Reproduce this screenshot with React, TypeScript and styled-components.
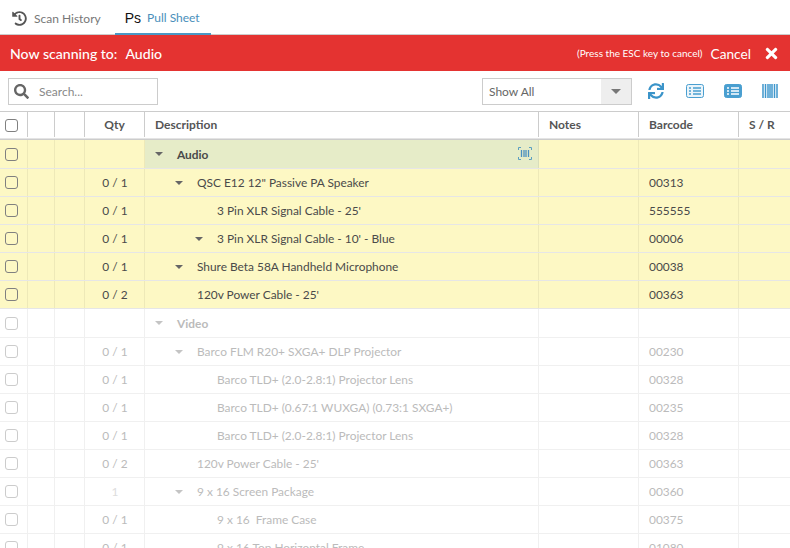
import React from 'react';
import styled, { createGlobalStyle } from 'styled-components';
import { FaHistory, FaSearch, FaSync, FaTimes } from 'react-icons/fa';

const GlobalStyle = createGlobalStyle`
  html, body {
    margin: 0;
    height: 100%;
    overflow: hidden;
    background: #fff;
    font-family: Lato, "Liberation Sans", sans-serif;
    color: #444;
  }
`;

type Item = { qty?: string; desc: string; depth: number; caret?: boolean; barcode?: string; group?: boolean };

const activeItems: Item[] = [
  { desc: 'Audio', depth: 0, caret: true, group: true },
  { qty: '0 / 1', desc: 'QSC E12 12" Passive PA Speaker', depth: 1, caret: true, barcode: '00313' },
  { qty: '0 / 1', desc: "3 Pin XLR Signal Cable - 25'", depth: 2, barcode: '555555' },
  { qty: '0 / 1', desc: "3 Pin XLR Signal Cable - 10' - Blue", depth: 2, caret: true, barcode: '00006' },
  { qty: '0 / 1', desc: 'Shure Beta 58A Handheld Microphone', depth: 1, caret: true, barcode: '00038' },
  { qty: '0 / 2', desc: "120v Power Cable - 25'", depth: 1, barcode: '00363' },
];

const dimItems: Item[] = [
  { desc: 'Video', depth: 0, caret: true, group: true },
  { qty: '0 / 1', desc: 'Barco FLM R20+ SXGA+ DLP Projector', depth: 1, caret: true, barcode: '00230' },
  { qty: '0 / 1', desc: 'Barco TLD+ (2.0-2.8:1) Projector Lens', depth: 2, barcode: '00328' },
  { qty: '0 / 1', desc: 'Barco TLD+ (0.67:1 WUXGA) (0.73:1 SXGA+)', depth: 2, barcode: '00235' },
  { qty: '0 / 1', desc: 'Barco TLD+ (2.0-2.8:1) Projector Lens', depth: 2, barcode: '00328' },
  { qty: '0 / 2', desc: "120v Power Cable - 25'", depth: 1, barcode: '00363' },
  { qty: '1', desc: '9 x 16 Screen Package', depth: 1, caret: true, barcode: '00360' },
  { qty: '0 / 1', desc: '9 x 16  Frame Case', depth: 2, barcode: '00375' },
  { qty: '0 / 1', desc: '9 x 16 Top Horizontal Frame', depth: 2, barcode: '01080' },
];

const ScanIcon = () => (
  <svg width="14" height="13" viewBox="0 0 14 13" fill="none">
    <path d="M0.5 3V0.5H3M11 0.5H13.5V3M13.5 10V12.5H11M3 12.5H0.5V10" stroke="#5a9fc0" strokeWidth="1" />
    <path d="M3.5 3V10M6 3V10M8 3V10M10.5 3V10" stroke="#4a8fc0" strokeWidth="1.3" />
  </svg>
);

const ListIcon = ({ filled }: { filled?: boolean }) => (
  <svg width="18" height="14" viewBox="0 0 18 14">
    <rect
      x="0.5"
      y="0.5"
      width="17"
      height="13"
      rx="2"
      fill={filled ? '#4a9fd0' : '#eaf4fa'}
      stroke="#4a9fd0"
    />
    <path
      d="M3 4H5M3 7H5M3 10H5M7 4H15M7 7H15M7 10H15"
      stroke={filled ? '#fff' : '#4a9fd0'}
      strokeWidth="1.6"
    />
  </svg>
);

const BarcodeIcon = () => (
  <svg width="16" height="14" viewBox="0 0 16 14">
    <path d="M1 0V14M3.5 0V14M6 0V14M8 0V14M10 0V14M12.5 0V14M15 0V14" stroke="#3f97cc" strokeWidth="1.5" />
  </svg>
);

const Row = ({ item, dim }: { item: Item; dim?: boolean }) => (
  <TableRow $dim={dim} $group={item.group}>
    <CheckCell>
      <Check $dim={dim} />
    </CheckCell>
    <Cell />
    <Cell />
    <QtyCell $faint={item.qty === '1'}>{item.qty}</QtyCell>
    <DescCell $group={item.group} $dim={dim}>
      <Indent $depth={item.depth}>
        {item.caret ? <Caret $dim={dim} /> : <CaretSpace />}
        <DescText $group={item.group}>{item.desc}</DescText>
      </Indent>
      {item.group && !dim && (
        <ScanSlot>
          <ScanIcon />
        </ScanSlot>
      )}
    </DescCell>
    <Cell />
    <BarcodeCell>{item.barcode}</BarcodeCell>
    <Cell />
  </TableRow>
);

export default function App() {
  return (
    <Page>
      <GlobalStyle />
      <Tabs>
        <Tab>
          <FaHistory size={15} color="#555" />
          <TabLabel>Scan History</TabLabel>
        </Tab>
        <Tab $active>
          <PsMark>Ps</PsMark>
          <TabLabel $active>Pull Sheet</TabLabel>
        </Tab>
      </Tabs>
      <Banner>
        <BannerTitle>
          Now scanning to:<BannerTarget>Audio</BannerTarget>
        </BannerTitle>
        <BannerActions>
          <EscHint>(Press the ESC key to cancel)</EscHint>
          <CancelLabel>Cancel</CancelLabel>
          <FaTimes size={17} color="#fff" />
        </BannerActions>
      </Banner>
      <Toolbar>
        <SearchBox>
          <FaSearch size={15} color="#666" />
          <SearchInput placeholder="Search..." />
        </SearchBox>
        <ToolbarRight>
          <SelectBox>
            <SelectValue>Show All</SelectValue>
            <SelectButton>
              <SelectCaret />
            </SelectButton>
          </SelectBox>
          <IconGroup>
            <FaSync size={16} color="#3b94c9" />
            <ListIcon />
            <ListIcon filled />
            <BarcodeIcon />
          </IconGroup>
        </ToolbarRight>
      </Toolbar>
      <HeaderRow>
        <HeadCheckCell>
          <Check $head />
        </HeadCheckCell>
        <HeadCell />
        <HeadCell />
        <HeadCell $center>Qty</HeadCell>
        <HeadCell>Description</HeadCell>
        <HeadCell>Notes</HeadCell>
        <HeadCell>Barcode</HeadCell>
        <HeadCell>S / R</HeadCell>
      </HeaderRow>
      {activeItems.map((item, i) => (
        <Row key={i} item={item} />
      ))}
      {dimItems.map((item, i) => (
        <Row key={i} item={item} dim />
      ))}
    </Page>
  );
}

const columns = '28px 27px 30px 60px 394px 100px 100px 1fr';

const Page = styled.div`
  width: 790px;
  height: 548px;
  overflow: hidden;
`;

const Tabs = styled.div`
  display: flex;
  height: 34px;
  padding-left: 12px;
  gap: 15px;
  border-bottom: 1px solid #ccc;
`;

const Tab = styled.div<{ $active?: boolean }>`
  display: flex;
  align-items: center;
  gap: ${p => (p.$active ? '6px' : '7px')};
  height: 35px;
  box-sizing: border-box;
  margin-left: ${p => (p.$active ? '-1px' : '0')};
  padding: ${p => (p.$active ? '2px 11px 0 10px' : '2px 0 0')};
  border-bottom: ${p => (p.$active ? '2px solid #4a97c4' : 'none')};
`;

const TabLabel = styled.span<{ $active?: boolean }>`
  font-size: 12px;
  color: ${p => (p.$active ? '#4a8fbb' : '#777')};
`;

const PsMark = styled.span`
  font-family: 'Liberation Sans', sans-serif;
  font-size: 14px;
  color: #111;
`;

const Banner = styled.div`
  display: flex;
  align-items: center;
  justify-content: space-between;
  height: 36px;
  padding: 0 10px 0 10px;
  background: #e43331;
  color: #fff;
`;

const BannerTitle = styled.div`
  font-size: 14.1px;
  font-weight: 500;
`;

const BannerTarget = styled.span`
  margin-left: 8px;
`;

const BannerActions = styled.div`
  display: flex;
  align-items: center;
`;

const EscHint = styled.span`
  font-size: 10px;
  margin-right: 8px;
`;

const CancelLabel = styled.span`
  font-size: 13.7px;
  margin-right: 12px;
`;

const Toolbar = styled.div`
  display: flex;
  align-items: center;
  justify-content: space-between;
  height: 40px;
  padding: 0 12px 0 8px;
  box-sizing: border-box;
`;

const SearchBox = styled.div`
  display: flex;
  align-items: center;
  box-sizing: border-box;
  width: 150px;
  height: 27px;
  padding-left: 5px;
  border: 1px solid #ccc;
`;

const SearchInput = styled.input`
  width: 100px;
  margin-left: 10px;
  padding: 0;
  border: 0;
  outline: 0;
  background: transparent;
  font-family: inherit;
  font-size: 12px;
  &::placeholder {
    color: #888;
    opacity: 1;
  }
`;

const ToolbarRight = styled.div`
  display: flex;
  align-items: center;
`;

const SelectBox = styled.div`
  display: flex;
  box-sizing: border-box;
  width: 150px;
  height: 27px;
  border: 1px solid #ccc;
`;

const SelectValue = styled.div`
  flex: 1;
  padding-left: 6px;
  line-height: 25px;
  font-size: 12px;
  color: #666;
`;

const SelectButton = styled.div`
  display: flex;
  align-items: center;
  justify-content: center;
  width: 30px;
  background: #eee;
`;

const SelectCaret = styled.div`
  border-left: 5px solid transparent;
  border-right: 5px solid transparent;
  border-top: 5px solid #777;
`;

const IconGroup = styled.div`
  display: flex;
  align-items: center;
  gap: 20px;
  margin-left: 16px;
  & > svg:first-child {
    margin-right: 2px;
  }
`;

const HeaderRow = styled.div`
  display: grid;
  grid-template-columns: ${columns};
  height: 29px;
  box-sizing: border-box;
  border-top: 1px solid #ccc;
  border-bottom: 1px solid #ccc;
  box-shadow: inset 0 -1px 0 #e4e4e4;
  padding-bottom: 2px;
`;

const HeadCell = styled.div<{ $center?: boolean }>`
  display: flex;
  align-items: center;
  justify-content: ${p => (p.$center ? 'center' : 'flex-start')};
  padding-left: ${p => (p.$center ? '0' : '10px')};
  border-right: 1px solid #ccc;
  font-size: 12px;
  font-weight: 700;
  color: #555;
  &:last-child {
    border-right: 0;
  }
`;

const HeadCheckCell = styled(HeadCell)`
  padding: 2px 0 0 5px;
`;

const TableRow = styled.div<{ $dim?: boolean; $group?: boolean }>`
  display: grid;
  grid-template-columns: ${columns};
  box-sizing: border-box;
  height: ${p => (p.$group ? '29px' : '28px')};
  background: ${p => (p.$dim ? '#fff' : '#fdf8c4')};
  color: ${p => (p.$dim ? '#bbb' : '#4a4a4a')};
  border-bottom: 1px solid ${p => (p.$dim ? '#f0f0f0' : '#e6e6e6')};
`;

const Cell = styled.div`
  display: flex;
  align-items: center;
  border-right: 1px solid rgba(0, 0, 0, 0.06);
  font-size: 11.9px;
  &:last-child {
    border-right: 0;
  }
`;

const CheckCell = styled(Cell)`
  padding-left: 5px;
`;

const QtyCell = styled(Cell)<{ $faint?: boolean }>`
  justify-content: center;
  padding-left: 1px;
  ${p => p.$faint && 'color: #ddd;'}
`;

const DescCell = styled(Cell)<{ $group?: boolean; $dim?: boolean }>`
  position: relative;
  padding-left: 10px;
  ${p => p.$group && !p.$dim && 'background: #e6ecc8;'}
`;

const BarcodeCell = styled(Cell)`
  padding-left: 10px;
`;

const Indent = styled.div<{ $depth: number }>`
  display: flex;
  align-items: center;
  padding-left: ${p => p.$depth * 20}px;
`;

const Caret = styled.span<{ $dim?: boolean }>`
  width: 0;
  height: 0;
  margin-right: 14px;
  border-left: 4px solid transparent;
  border-right: 4px solid transparent;
  border-top: 4px solid ${p => (p.$dim ? '#c4c4c4' : '#666')};
`;

const CaretSpace = styled.span`
  width: 22px;
`;

const DescText = styled.span<{ $group?: boolean }>`
  white-space: pre;
  font-weight: ${p => (p.$group ? 700 : 400)};
`;

const ScanSlot = styled.div`
  position: absolute;
  top: 7px;
  right: 6px;
  display: flex;
`;

const Check = styled.div<{ $dim?: boolean; $head?: boolean }>`
  box-sizing: border-box;
  width: 13px;
  height: 13px;
  border-radius: 3px;
  border: 1px solid ${p => (p.$dim ? '#ccc' : '#808080')};
  ${p => p.$head && 'background: #fff;'}
`;
